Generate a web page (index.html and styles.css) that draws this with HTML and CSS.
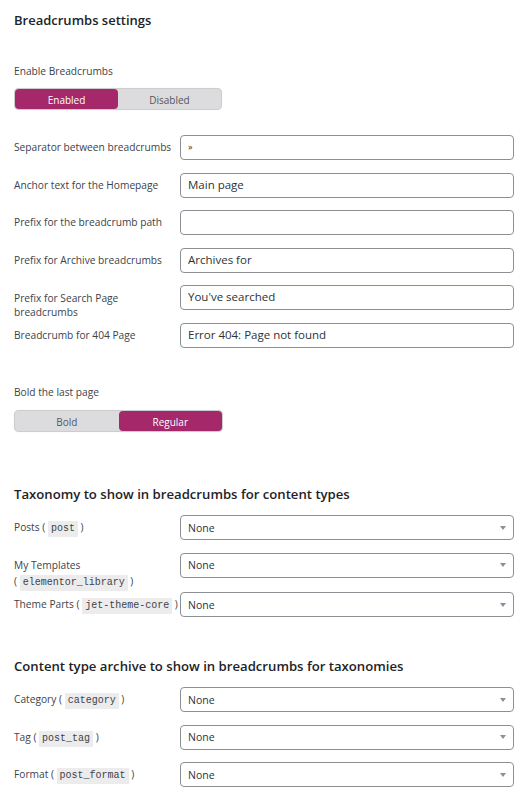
FILE: index.html
```html
<!DOCTYPE html>
<html lang="en">
<head>
<meta charset="utf-8">
<title>Breadcrumbs settings</title>
<link rel="stylesheet" href="styles.css">
</head>
<body>
<main class="settings">
  <h2 class="section-title title-main">Breadcrumbs settings</h2>

  <div class="block block-enable">
    <div class="block-label">Enable Breadcrumbs</div>
    <div class="switch">
      <span class="switch-opt is-active">Enabled</span>
      <span class="switch-opt">Disabled</span>
    </div>
  </div>

  <div class="rows rows-text">
    <div class="row"><label class="row-label">Separator between breadcrumbs</label><input class="text-input sep-input" type="text" value="»"></div>
    <div class="row"><label class="row-label">Anchor text for the Homepage</label><input class="text-input" type="text" value="Main page"></div>
    <div class="row"><label class="row-label">Prefix for the breadcrumb path</label><input class="text-input" type="text" value=""></div>
    <div class="row"><label class="row-label">Prefix for Archive breadcrumbs</label><input class="text-input" type="text" value="Archives for"></div>
    <div class="row"><label class="row-label">Prefix for Search Page breadcrumbs</label><input class="text-input" type="text" value="You've searched"></div>
    <div class="row"><label class="row-label">Breadcrumb for 404 Page</label><input class="text-input" type="text" value="Error 404: Page not found"></div>
  </div>

  <div class="block block-bold">
    <div class="block-label">Bold the last page</div>
    <div class="switch">
      <span class="switch-opt">Bold</span>
      <span class="switch-opt is-active">Regular</span>
    </div>
  </div>

  <h2 class="section-title title-tax">Taxonomy to show in breadcrumbs for content types</h2>

  <div class="rows rows-select">
    <div class="row"><label class="row-label">Posts <span class="slug">( <code>post</code> )</span></label><div class="select-wrap"><select class="select-input"><option>None</option></select></div></div>
    <div class="row row-wrap"><label class="row-label">My Templates <span class="slug">( <code>elementor_library</code> )</span></label><div class="select-wrap"><select class="select-input"><option>None</option></select></div></div>
    <div class="row"><label class="row-label">Theme Parts <span class="slug">( <code>jet-theme-core</code> )</span></label><div class="select-wrap"><select class="select-input"><option>None</option></select></div></div>
  </div>

  <h2 class="section-title title-arch">Content type archive to show in breadcrumbs for taxonomies</h2>

  <div class="rows rows-select">
    <div class="row"><label class="row-label">Category <span class="slug">( <code>category</code> )</span></label><div class="select-wrap"><select class="select-input"><option>None</option></select></div></div>
    <div class="row"><label class="row-label">Tag <span class="slug">( <code>post_tag</code> )</span></label><div class="select-wrap"><select class="select-input"><option>None</option></select></div></div>
    <div class="row"><label class="row-label">Format <span class="slug">( <code>post_format</code> )</span></label><div class="select-wrap"><select class="select-input"><option>None</option></select></div></div>
  </div>
</main>
</body>
</html>
```

FILE: styles.css
```css
* {
  box-sizing: border-box;
}

html,
body {
  margin: 0;
  background: #ffffff;
}

body {
  font-family: "Open Sans", "Noto Sans", sans-serif;
  color: #3c434a;
}

.settings {
  padding: 11px 13px 0 14px;
  display: flex;
  flex-direction: column;
}

.section-title {
  margin: 0;
  font-size: 13px;
  font-weight: 600;
  line-height: 18px;
  color: #1d2327;
}

.title-tax {
  margin-top: 52.6px;
  font-size: 13.15px;
}

.title-arch {
  margin-top: 40.6px;
  font-size: 13.15px;
}

/* label + switch blocks */
.block {
  display: flex;
  flex-direction: column;
  align-items: flex-start;
}

.block-enable {
  margin-top: 35px;
}

.block-bold {
  margin-top: 37.5px;
}

.block-label {
  font-size: 10.2px;
  line-height: 15px;
  color: #3c434a;
}

.block-enable .block-label {
  margin-bottom: 9px;
}

.block-bold .block-label {
  margin-bottom: 10px;
}

.switch {
  display: flex;
  width: 208px;
  height: 22px;
  padding: 1px;
  background: #dcdcde;
  border-radius: 5px;
  box-shadow: inset 0 0 0 1px #cdcdcf, 0 0 1px rgba(0, 0, 0, 0.15);
}

.block-bold .switch {
  width: 209px;
}

.switch-opt {
  flex: 1;
  display: flex;
  align-items: center;
  justify-content: center;
  padding-top: 1px;
  font-size: 10px;
  color: #50575e;
  border-radius: 4px;
}

.switch-opt.is-active {
  background: #a4286a;
  color: #ffffff;
}

/* rows */
.rows {
  display: flex;
  flex-direction: column;
}

.rows-text {
  margin-top: 25px;
  gap: 12.6px;
}

.rows-select {
  margin-top: 11.7px;
  gap: 12.5px;
}

.title-arch + .rows-select {
  margin-top: 11.4px;
  gap: 12.6px;
}

.row {
  display: grid;
  grid-template-columns: 166px 1fr;
  height: 25px;
  align-items: start;
}

.row-wrap {
  height: 27px;
}

.row-label {
  font-size: 10.2px;
  line-height: 14px;
  padding-top: 5.3px;
  color: #3c434a;
}

.rows-select .row-label {
  line-height: 16px;
  padding-top: 4.3px;
}

.slug {
  white-space: nowrap;
}

code {
  display: inline-block;
  height: 16px;
  line-height: 16px;
  padding: 0 3px;
  font-family: "Liberation Mono", "DejaVu Sans Mono", monospace;
  font-size: 10px;
  color: #3c434a;
  background: #ececec;
}

.text-input,
.select-input {
  width: 100%;
  height: 25px;
  margin: 0;
  border: 1px solid #8c8f94;
  border-radius: 4px;
  background: #ffffff;
  font-family: "Open Sans", "Noto Sans", sans-serif;
  color: #2c3338;
  outline: none;
}

.text-input {
  padding: 0 7px 2px;
  font-size: 11.5px;
}

.sep-input {
  font-size: 9px;
}

.select-wrap {
  position: relative;
}

.select-input {
  appearance: none;
  -webkit-appearance: none;
  padding: 0 24px 0 7px;
  font-size: 10.5px;
}

.select-wrap::after {
  content: "";
  position: absolute;
  right: 8px;
  top: 11px;
  border-left: 3px solid transparent;
  border-right: 3px solid transparent;
  border-top: 4px solid #8c8f94;
  pointer-events: none;
}
```
